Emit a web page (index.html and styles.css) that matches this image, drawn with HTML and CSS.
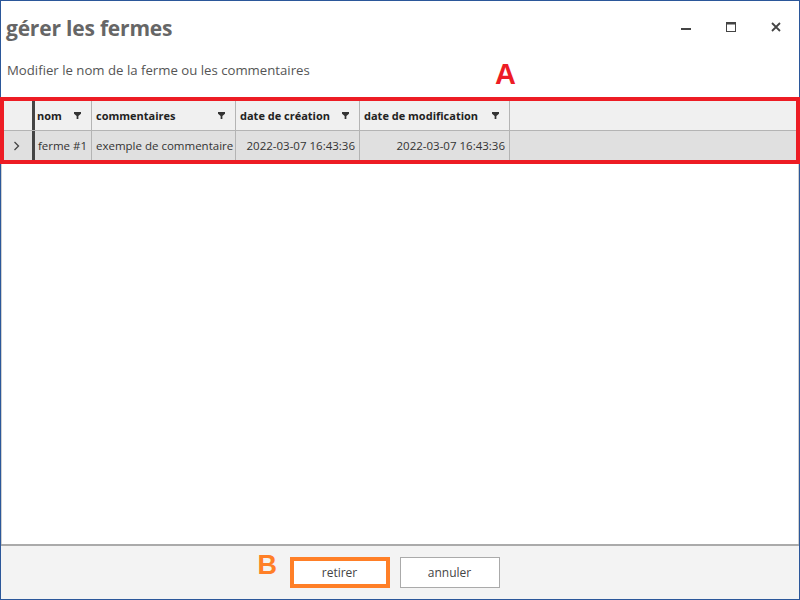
FILE: index.html
```html
<!DOCTYPE html>
<html lang="fr">
<head>
<meta charset="utf-8">
<title>gérer les fermes</title>
<link rel="stylesheet" href="styles.css">
</head>
<body>
<div class="window">
  <div class="titlebar">
    <h1 class="title">gérer les fermes</h1>
    <div class="controls">
      <span class="ctl"><svg width="10" height="10" viewBox="0 0 10 10"><rect x="0" y="6" width="10" height="2" fill="#444"/></svg></span>
      <span class="ctl"><svg width="10" height="10" viewBox="0 0 10 10"><rect x="0.5" y="0.5" width="9" height="9" fill="none" stroke="#444" stroke-width="1"/><rect x="0" y="0" width="10" height="2.5" fill="#444"/></svg></span>
      <span class="ctl"><svg width="10" height="10" viewBox="0 0 10 10"><path d="M1 1 L9 9 M9 1 L1 9" stroke="#444" stroke-width="1.8"/></svg></span>
    </div>
  </div>
  <div class="subtitle">Modifier le nom de la ferme ou les commentaires</div>
  <div class="content">
    <div class="grid-wrap">
      <div class="grid">
        <div class="row header">
          <div class="cell rh"></div>
          <div class="cell c-nom"><span>nom</span><svg class="filter" viewBox="0 0 8 8"><path d="M0 0 H8 V2 L5 4.5 V8 H3 V4.5 L0 2 Z" fill="#333"/></svg></div>
          <div class="cell c-com"><span>commentaires</span><svg class="filter" viewBox="0 0 8 8"><path d="M0 0 H8 V2 L5 4.5 V8 H3 V4.5 L0 2 Z" fill="#333"/></svg></div>
          <div class="cell c-cre"><span>date de création</span><svg class="filter" viewBox="0 0 8 8"><path d="M0 0 H8 V2 L5 4.5 V8 H3 V4.5 L0 2 Z" fill="#333"/></svg></div>
          <div class="cell c-mod"><span>date de modification</span><svg class="filter" viewBox="0 0 8 8"><path d="M0 0 H8 V2 L5 4.5 V8 H3 V4.5 L0 2 Z" fill="#333"/></svg></div>
          <div class="cell c-rest"></div>
        </div>
        <div class="row data">
          <div class="cell rh"><svg width="8" height="10" viewBox="0 0 8 10"><path d="M1.5 1 L5.5 5 L1.5 9" fill="none" stroke="#444" stroke-width="1.3"/></svg></div>
          <div class="cell c-nom right">ferme #1</div>
          <div class="cell c-com">exemple de commentaire</div>
          <div class="cell c-cre right">2022-03-07 16:43:36</div>
          <div class="cell c-mod right">2022-03-07 16:43:36</div>
          <div class="cell c-rest"></div>
        </div>
      </div>
      <div class="mark-a">A</div>
    </div>
  </div>
  <div class="footer">
    <div class="btn-wrap">
      <span class="mark-b">B</span>
      <button class="btn primary">retirer</button>
    </div>
    <button class="btn">annuler</button>
  </div>
</div>
</body>
</html>
```

FILE: styles.css
```css
html, body {
  margin: 0;
  padding: 0;
  background: #ffffff;
}
body {
  font-family: "Open Sans", "Noto Sans", sans-serif;
}
.window {
  width: 800px;
  height: 600px;
  box-sizing: border-box;
  border: 1px solid #2b579a;
  display: flex;
  flex-direction: column;
  background: #ffffff;
}
.titlebar {
  height: 52px;
  display: flex;
  align-items: flex-start;
  justify-content: space-between;
}
.title {
  margin: 0;
  padding: 13px 0 0 5px;
  font-size: 21px;
  font-weight: 700;
  color: #666666;
  letter-spacing: -0.2px;
}
.controls {
  display: flex;
  padding: 21px 18px 0 0;
  gap: 35px;
}
.ctl {
  display: block;
  width: 10px;
  height: 10px;
}
.ctl svg { display: block; }
.subtitle {
  height: 44px;
  padding: 8px 0 0 6px;
  box-sizing: border-box;
  font-size: 13.2px;
  color: #555555;
}
.content {
  flex: 1;
  border-left: 1px solid #d0d0d0;
  border-right: 1px solid #d0d0d0;
  background: #ffffff;
}
.grid-wrap {
  position: relative;
  padding-top: 4px;
}
.grid-wrap::after {
  content: "";
  position: absolute;
  left: -2px;
  right: -2px;
  top: 0;
  height: 67px;
  box-sizing: border-box;
  border: 4px solid #ed1c24;
}
.mark-a {
  position: absolute;
  left: 493px;
  top: -39px;
  font-family: "Liberation Sans", Arial, sans-serif;
  font-weight: 700;
  font-size: 29px;
  color: #ed1c24;
}
.grid {
  font-size: 11.5px;
  color: #333333;
}
.row {
  display: flex;
}
.row.header {
  height: 30px;
  box-sizing: border-box;
  background: #f0f0f0;
  border-bottom: 1px solid #b4b4b4;
  font-weight: 700;
  font-size: 11px;
  color: #222222;
}
.row.data {
  height: 29px;
  background: #e0e0e0;
}
.cell {
  box-sizing: border-box;
  border-right: 1px solid #b4b4b4;
  display: flex;
  align-items: center;
  padding: 0 4px;
  white-space: nowrap;
}
.cell.rh {
  width: 33px;
  border-right: 3px solid #444444;
  justify-content: center;
  padding-left: 4px;
}
.cell.right { justify-content: flex-end; }
.header .cell { justify-content: space-between; }
.header .cell.rh { justify-content: center; }
.header .c-nom { padding-left: 2px; }
.c-nom { width: 57px; }
.c-com { width: 144px; }
.c-cre { width: 124px; }
.c-mod { width: 150px; }
.c-rest { flex: 1; border-right: none; }
.filter {
  width: 7px;
  height: 7px;
  margin-right: 6px;
  flex: none;
}
.footer {
  height: 55px;
  border-top: 2px solid #aaaaaa;
  background: #f3f3f3;
  display: flex;
  justify-content: center;
  gap: 10px;
  padding-top: 11px;
  padding-right: 11px;
  box-sizing: border-box;
}
.btn-wrap {
  position: relative;
}
.btn {
  width: 100px;
  height: 31px;
  box-sizing: border-box;
  border: 1px solid #aaaaaa;
  background: #ffffff;
  font-family: "Open Sans", "Noto Sans", sans-serif;
  font-size: 12px;
  color: #444444;
  padding: 0;
}
.btn.primary {
  border: 4px solid #ff7f27;
}
.mark-b {
  position: absolute;
  left: -32px;
  top: -7px;
  font-family: "Liberation Sans", Arial, sans-serif;
  font-weight: 700;
  font-size: 27px;
  color: #ff7f27;
}
```
